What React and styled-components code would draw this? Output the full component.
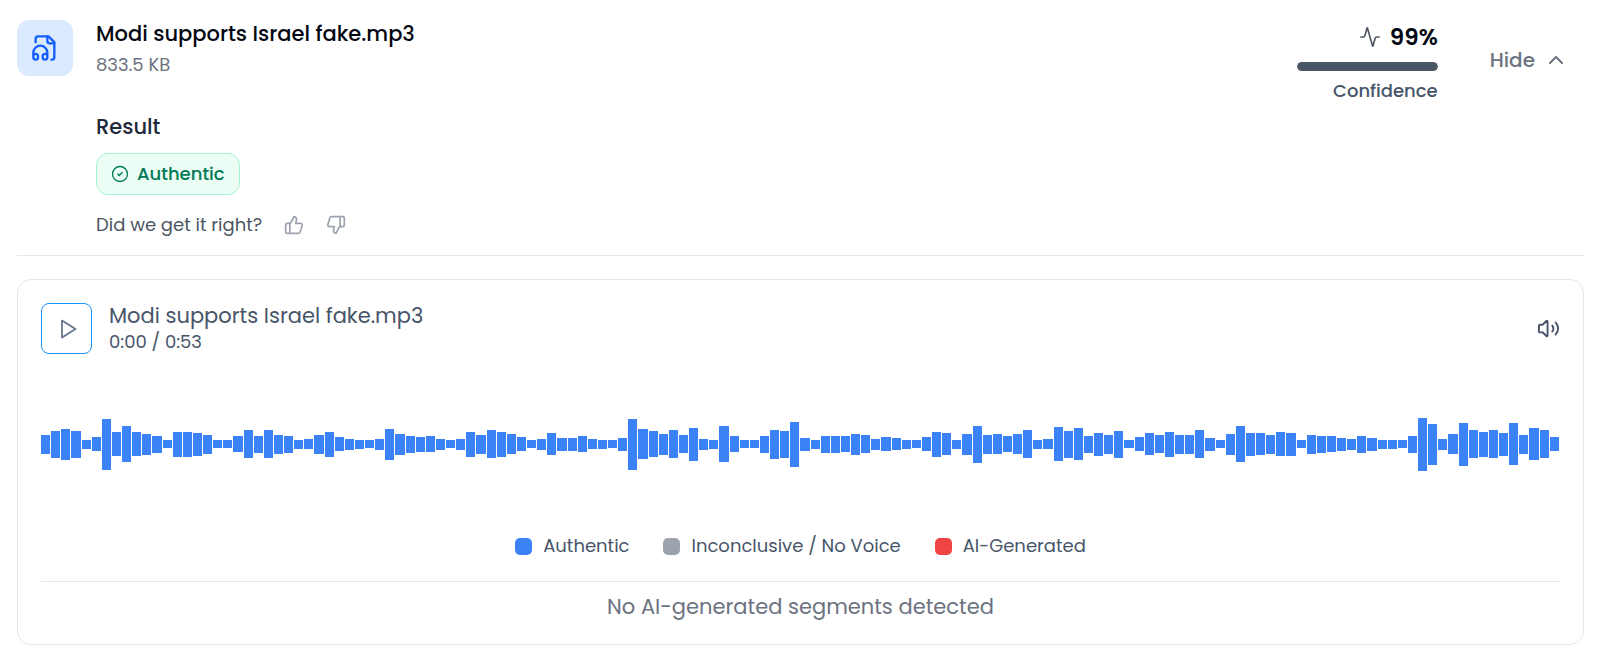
import React from "react";
import styled, { createGlobalStyle } from "styled-components";
import {
  Activity,
  ChevronUp,
  CircleCheck,
  ThumbsDown,
  ThumbsUp,
  Volume2
} from "lucide-react";

const levels = [
  19, 27, 31, 27, 9, 14, 51, 24, 36, 24, 21, 17, 8, 25, 25,
  23, 19, 8, 8, 16, 28, 17, 28, 19, 17, 9, 10, 19, 25, 14,
  11, 9, 8, 11, 31, 21, 17, 15, 16, 11, 8, 11, 25, 19, 28,
  25, 20, 14, 8, 11, 22, 13, 13, 16, 10, 9, 8, 13, 51, 30,
  26, 21, 28, 18, 33, 11, 9, 36, 16, 8, 8, 17, 29, 27, 45,
  13, 9, 17, 17, 16, 21, 18, 11, 14, 12, 9, 8, 14, 25, 22,
  9, 21, 37, 19, 20, 16, 20, 28, 9, 10, 34, 27, 32, 17, 23,
  19, 27, 8, 14, 22, 18, 25, 19, 19, 28, 13, 8, 21, 36, 23,
  22, 19, 24, 23, 8, 19, 17, 16, 13, 11, 17, 13, 9, 9, 8,
  17, 53, 41, 11, 20, 43, 28, 25, 28, 23, 42, 19, 32, 28, 14
];

const legend = [
  { label: "Authentic", color: "#3b82f6" },
  { label: "Inconclusive / No Voice", color: "#9ca3af" },
  { label: "AI-Generated", color: "#ef4444" }
];

const file = {
  name: "Modi supports Israel fake.mp3",
  size: "833.5 KB"
};

const AudioFileIcon = () => (
  <svg
    width="28"
    height="28"
    viewBox="0 0 24 24"
    fill="none"
    stroke="currentColor"
    strokeWidth="2"
    strokeLinecap="round"
    strokeLinejoin="round"
    aria-hidden="true"
  >
    <path d="M17.5 22h.5a2 2 0 0 0 2-2V7l-5-5H6a2 2 0 0 0-2 2v3" />
    <path d="M14 2v4a2 2 0 0 0 2 2h4" />
    <path d="M2 19a2 2 0 1 1 4 0v1a2 2 0 1 1-4 0v-4a6 6 0 0 1 12 0v4a2 2 0 1 1-4 0v-1a2 2 0 1 1 4 0" />
  </svg>
);

const PlayIcon = () => (
  <svg
    width="24"
    height="24"
    viewBox="0 0 24 24"
    fill="none"
    stroke="currentColor"
    strokeWidth="1.75"
    strokeLinejoin="round"
    aria-hidden="true"
  >
    <path d="M6 3.5 19.5 12 6 20.5Z" />
  </svg>
);

const App = () => (
  <Page>
    <GlobalStyle />
    <Summary>
      <FileBadge>
        <AudioFileIcon />
      </FileBadge>
      <Details>
        <FileName>{file.name}</FileName>
        <FileSize>{file.size}</FileSize>
        <ResultHeading>Result</ResultHeading>
        <Verdict>
          <CircleCheck size={18} strokeWidth={1.75} />
          Authentic
        </Verdict>
        <Feedback>
          <span>Did we get it right?</span>
          <IconButton aria-label="Yes">
            <ThumbsUp size={20} strokeWidth={2} />
          </IconButton>
          <IconButton aria-label="No">
            <ThumbsDown size={20} strokeWidth={2} />
          </IconButton>
        </Feedback>
      </Details>
      <Confidence>
        <Score>
          <Activity size={22} strokeWidth={1.75} />
          99%
        </Score>
        <Track>
          <Fill style={{ width: "100%" }} />
        </Track>
        <ConfidenceLabel>Confidence</ConfidenceLabel>
      </Confidence>
      <HideButton>
        Hide
        <ChevronUp size={24} strokeWidth={2} />
      </HideButton>
    </Summary>
    <Player>
      <PlayerHead>
        <PlayButton aria-label="Play">
          <PlayIcon />
        </PlayButton>
        <TrackInfo>
          <TrackName>{file.name}</TrackName>
          <TrackTime>0:00 / 0:53</TrackTime>
        </TrackInfo>
        <VolumeButton aria-label="Volume">
          <Volume2 size={23} strokeWidth={2} />
        </VolumeButton>
      </PlayerHead>
      <Waveform>
        {levels.map((level, i) => (
          <Bar key={i} style={{ height: level }} />
        ))}
      </Waveform>
      <Legend>
        {legend.map(item => (
          <LegendItem key={item.label}>
            <Swatch $color={item.color} />
            {item.label}
          </LegendItem>
        ))}
      </Legend>
      <Segments>No AI-generated segments detected</Segments>
    </Player>
  </Page>
);

export default App;

const GlobalStyle = createGlobalStyle`
  * {
    box-sizing: border-box;
  }
  body {
    margin: 0;
    background: #ffffff;
    color: #475569;
    font-family: Poppins, Inter, sans-serif;
  }
  svg {
    display: block;
    flex-shrink: 0;
  }
`;

const Button = styled.button`
  padding: 0;
  border: 0;
  background: none;
  font-family: inherit;
  cursor: pointer;
`;

const Page = styled.main`
  padding: 20px 16px 0 17px;
`;

const Summary = styled.section`
  display: flex;
  align-items: flex-start;
  padding-bottom: 17px;
  border-bottom: 1px solid #e5e7eb;
`;

const FileBadge = styled.div`
  display: flex;
  align-items: center;
  justify-content: center;
  width: 56px;
  height: 56px;
  border-radius: 12px;
  background: #dbeafe;
  color: #155dfc;
`;

const Details = styled.div`
  flex: 1;
  margin-left: 23px;
`;

const FileName = styled.h1`
  margin: 0;
  color: #030712;
  font-size: 21px;
  font-weight: 500;
  line-height: 28px;
`;

const FileSize = styled.div`
  margin-top: 4px;
  color: #6b7280;
  font-size: 18px;
  line-height: 26px;
`;

const ResultHeading = styled.h2`
  margin: 35px 0 12px;
  color: #1e293b;
  font-size: 21px;
  font-weight: 500;
  line-height: 28px;
`;

const Verdict = styled.div`
  display: inline-flex;
  align-items: center;
  gap: 8px;
  padding: 7px 14px;
  border: 1px solid #a4f4cf;
  border-radius: 12px;
  background: #ecfdf5;
  color: #007a55;
  font-size: 18px;
  font-weight: 500;
  line-height: 26px;
`;

const Feedback = styled.div`
  display: flex;
  align-items: center;
  gap: 22px;
  margin-top: 17px;
  color: #4b5563;
  font-size: 18px;
  line-height: 26px;
`;

const IconButton = styled(Button)`
  color: #9ca3af;
`;

const Confidence = styled.div`
  display: flex;
  flex-direction: column;
  align-items: flex-end;
  width: 141px;
  padding-top: 3px;
`;

const Score = styled.div`
  display: flex;
  align-items: center;
  gap: 9px;
  color: #030712;
  font-size: 23px;
  font-weight: 600;
  line-height: 28px;

  svg {
    color: #4b5563;
  }
`;

const Track = styled.div`
  width: 100%;
  height: 9px;
  margin: 11px 0 7px;
  border-radius: 5px;
  background: #e5e7eb;
  overflow: hidden;
`;

const Fill = styled.div`
  height: 100%;
  border-radius: 5px;
  background: #4a5565;
`;

const ConfidenceLabel = styled.div`
  color: #475569;
  font-size: 18px;
  font-weight: 500;
  line-height: 26px;
`;

const HideButton = styled(Button)`
  display: flex;
  align-items: center;
  gap: 9px;
  margin: 26px 16px 0 52px;
  color: #6b7280;
  font-size: 20px;
  font-weight: 500;
  line-height: 28px;
`;

const Player = styled.section`
  margin-top: 23px;
  padding: 23px;
  border: 1px solid #e2e8f0;
  border-radius: 14px;
`;

const PlayerHead = styled.div`
  display: flex;
  align-items: center;
`;

const PlayButton = styled(Button)`
  display: flex;
  align-items: center;
  justify-content: center;
  width: 51px;
  height: 51px;
  padding-left: 2px;
  border: 1px solid #1890ff;
  border-radius: 8px;
  color: #64748b;
`;

const TrackInfo = styled.div`
  flex: 1;
  margin-left: 17px;
`;

const TrackName = styled.div`
  font-size: 21px;
  line-height: 26px;
`;

const TrackTime = styled.div`
  font-size: 18px;
  line-height: 25px;
`;

const VolumeButton = styled(Button)`
  color: #475569;
`;

const Waveform = styled.div`
  display: flex;
  align-items: center;
  gap: 1px;
  height: 136px;
  margin-top: 22px;
  padding-right: 1px;
`;

const Bar = styled.div`
  flex: 1;
  background: #3b82f6;
`;

const Legend = styled.div`
  display: flex;
  justify-content: center;
  gap: 34px;
  margin-top: 21px;
`;

const LegendItem = styled.div`
  display: flex;
  align-items: center;
  gap: 11px;
  font-size: 18px;
  line-height: 26px;
`;

const Swatch = styled.span`
  width: 17px;
  height: 17px;
  border-radius: 5px;
  background: ${props => props.$color};
`;

const Segments = styled.p`
  margin: 22px 0 0;
  padding-top: 11px;
  border-top: 1px solid #e5e7eb;
  color: #6b7280;
  font-size: 21px;
  line-height: 28px;
  text-align: center;
`;
